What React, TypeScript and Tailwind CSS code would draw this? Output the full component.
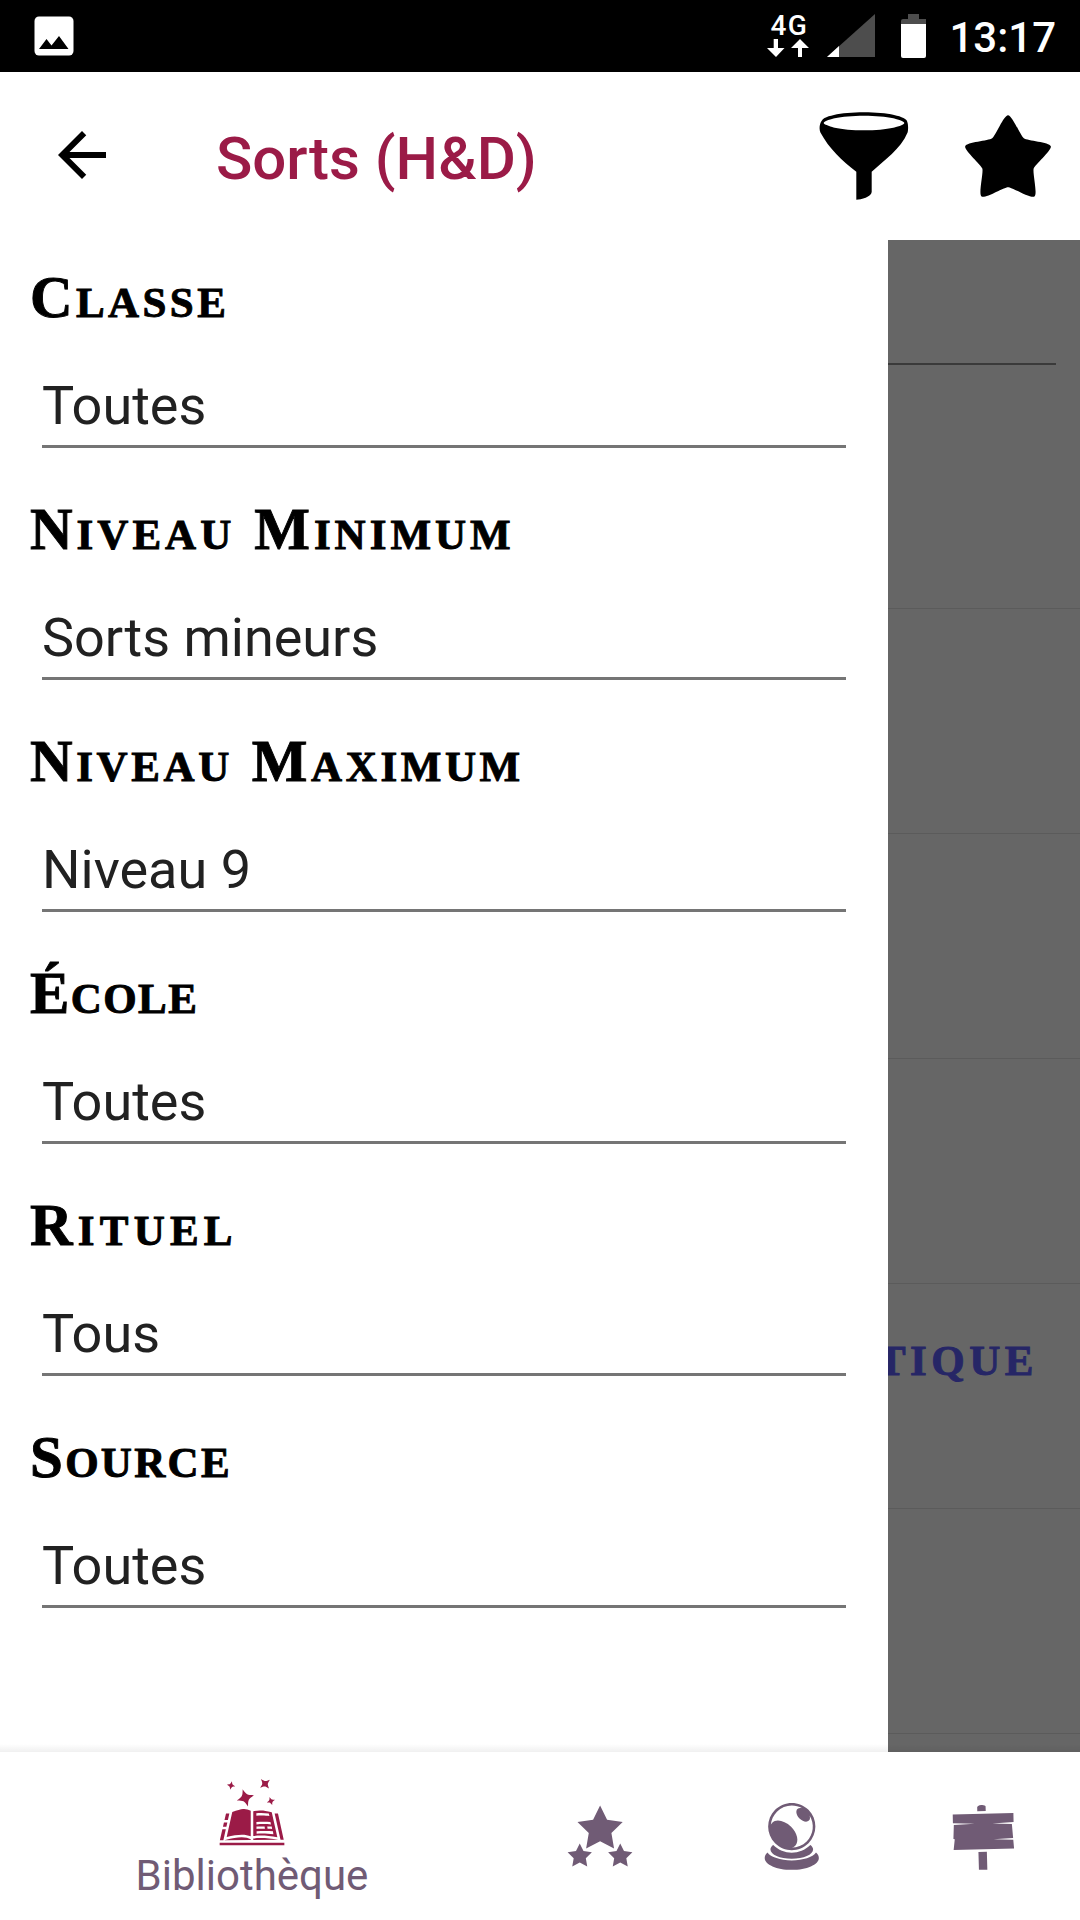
import {
  GiCrystalBall,
  GiFunnel,
  GiRoundStar,
  GiSpellBook,
  GiStarsStack,
  GiWoodenSign,
} from "react-icons/gi";
import { MdArrowBack } from "react-icons/md";

const filters = [
  { label: "Classe", value: "Toutes", spacing: "tracking-[3.4px]" },
  { label: "Niveau Minimum", value: "Sorts mineurs", spacing: "tracking-[4px]" },
  { label: "Niveau Maximum", value: "Niveau 9", spacing: "tracking-[3.6px]" },
  { label: "École", value: "Toutes", spacing: "tracking-[1.4px]" },
  { label: "Rituel", value: "Tous", spacing: "tracking-[5.2px]" },
  { label: "Source", value: "Toutes", spacing: "tracking-[2.3px]" },
];

function StatusBar() {
  return (
    <div className="flex h-[72px] shrink-0 items-start bg-black text-white">
      <svg className="mt-4 ml-[34px] h-10 w-10" viewBox="0 0 40 40">
        <rect x="0.5" y="0.5" width="39" height="39" rx="4.5" fill="#fff" />
        <path d="M5 33l7.5-10 5 6.500 7.500-9.500 9.500 13z" fill="#000" />
      </svg>
      <div className="mt-[11px] ml-auto flex w-[44px] flex-col items-center">
        <span className="h-7 pl-[2px] text-[28px] leading-[30px] font-medium tracking-[1.500px]">4G</span>
        <svg className="h-[18px] w-[42px]" viewBox="0 0 42 18" fill="#fff">
          <path d="M6.700 0h4.300v9h6.500L9 18 0 9h6.700z" />
          <path d="M31 18h4V9h7L33 0l-9 9h7z" />
        </svg>
      </div>
      <svg className="mt-[14px] ml-[17px] h-[43px] w-12" viewBox="0 0 48 43">
        <path d="M48 0v43H0z" fill="#4d4d4d" />
        <path d="M12 32v11H0z" fill="#fff" />
      </svg>
      <svg className="mt-[14px] ml-[26px] h-11 w-[25px]" viewBox="0 0 25 44">
        <path d="M7 0h11v5h7v6H0V7q0-2 2-2h5z" fill="#4d4d4d" />
        <path d="M0 10h25v32q0 2-2 2H2q-2 0-2-2z" fill="#fff" />
      </svg>
      <span className="mt-[13px] mr-6 ml-[23px] text-[42px] leading-[50px] font-medium">13:17</span>
    </div>
  );
}

function AppBar() {
  return (
    <header className="flex h-[168px] shrink-0 items-center bg-white pl-[46px]">
      <MdArrowBack className="-mt-[2px] size-[72px]" />
      <h1 className="mt-[6px] ml-[98px] text-[60px] leading-[70px] font-medium text-[#9b1b47]">Sorts (H&amp;D)</h1>
      <GiFunnel className="ml-auto size-24" />
      <GiRoundStar className="mr-6 ml-12 size-24" />
    </header>
  );
}

function FilterDrawer() {
  return (
    <aside className="flex w-[888px] shrink-0 flex-col bg-white pr-[42px] pl-[30px]">
      {filters.map((f) => (
        <section key={f.label} className="h-[232px]">
          <h2
            className={`flex h-[116px] gap-[19px] pt-[19px] font-['Liberation_Serif',serif] text-[43px] leading-[76px] font-bold whitespace-nowrap uppercase [-webkit-text-stroke:0.9px] ${f.spacing}`}
          >
            {f.label.split(" ").map((word) => (
              <span key={word} className="block first-letter:text-[59px]">
                {word}
              </span>
            ))}
          </h2>
          <div className="ml-3 h-[92px] border-b-[3px] border-[#757575] pt-[18px] text-[54px] leading-[64px] text-[#212121]">
            {f.value}
          </div>
        </section>
      ))}
    </aside>
  );
}

function DimmedSpellList() {
  return (
    <div className="flex min-w-0 flex-1 flex-col overflow-hidden bg-[#666666]">
      <div className="h-[369px] shrink-0 border-b border-[#5b5b5b]">
        <div className="mr-6 h-[125px] border-b-2 border-[#3a3a3a]" />
      </div>
      {["", "", "", "tique", ""].map((name, i) => (
        <div key={i} className="flex h-[225px] shrink-0 justify-end border-b border-[#5b5b5b] pr-[42px]">
          <span className="pt-[39px] font-['Liberation_Serif',serif] text-[43px] leading-[76px] font-bold tracking-[4.500px] text-[#262666] uppercase [-webkit-text-stroke:0.9px]">
            {name}
          </span>
        </div>
      ))}
    </div>
  );
}

function BottomNav() {
  return (
    <nav className="relative flex h-[168px] shrink-0 bg-white text-[#705b75]">
      <div className="absolute inset-x-0 -top-2 h-2 bg-gradient-to-b from-black/0 to-black/6" />
      <div className="flex w-[504px] flex-col items-center pt-[24px]">
        <GiSpellBook className="size-[72px] text-[#9b1b47]" />
        <span className="mt-[3px] text-[42px] leading-[50px]">Bibliothèque</span>
      </div>
      {[GiStarsStack, GiCrystalBall, GiWoodenSign].map((Icon, i) => (
        <div key={i} className="flex w-[192px] justify-center pt-[48px]">
          <Icon className="size-[72px]" />
        </div>
      ))}
    </nav>
  );
}

export default function App() {
  return (
    <div className="flex h-[1920px] w-[1080px] flex-col overflow-hidden bg-white font-['Roboto',sans-serif] text-black">
      <StatusBar />
      <AppBar />
      <main className="flex h-[1512px] shrink-0 overflow-hidden">
        <FilterDrawer />
        <DimmedSpellList />
      </main>
      <BottomNav />
    </div>
  );
}
